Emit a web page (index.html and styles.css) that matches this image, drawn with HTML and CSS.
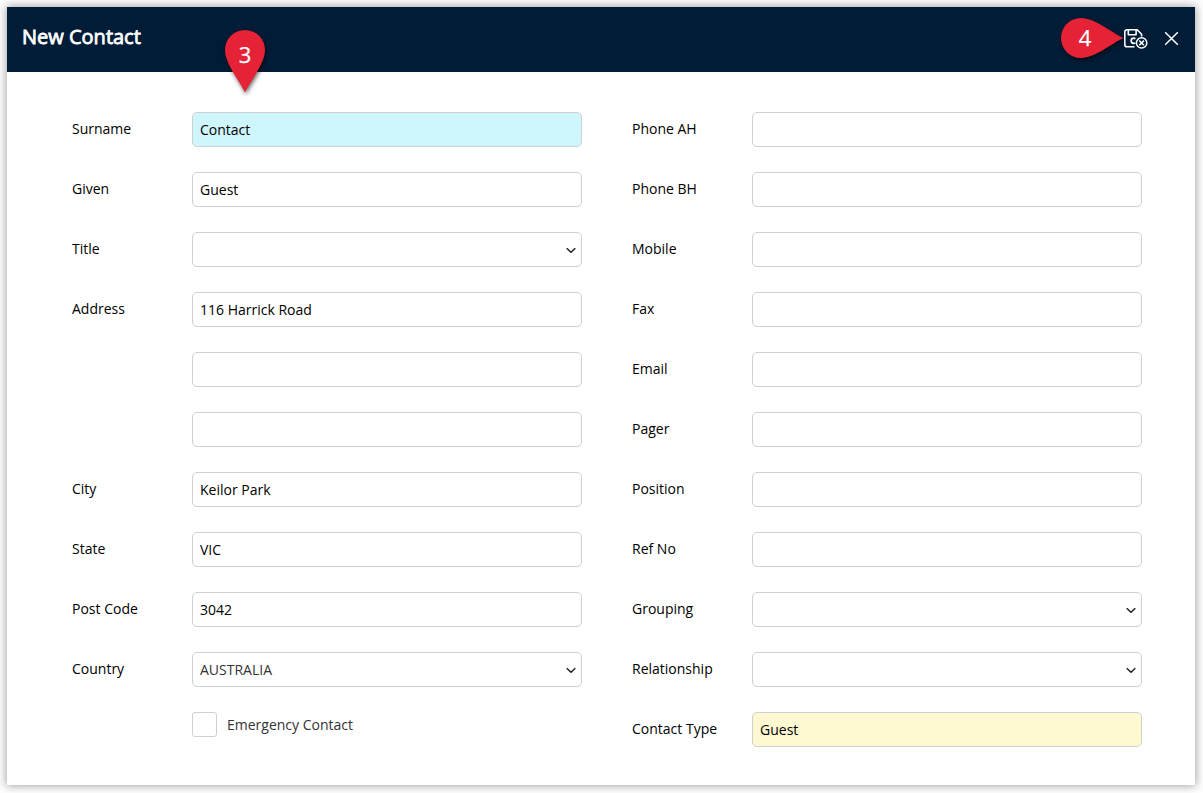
FILE: index.html
```html
<!DOCTYPE html>
<html lang="en">
<head>
<meta charset="utf-8">
<title>New Contact</title>
<link rel="stylesheet" href="styles.css">
</head>
<body>
<main class="dialog">
  <header class="header">
    <h1 class="title">New Contact</h1>
    <div class="actions">
      <svg class="save" width="24" height="20" viewBox="0 0 24 20" fill="none" stroke="#fff" stroke-width="1.6" stroke-linejoin="round">
        <path d="M10.5 17.8H3.2Q.8 17.8 .8 15.4V3.1Q.8.8 3.2.8H13.2L17.6 5.2V7.6"/>
        <path d="M4.3 1V5.8H12.1V1"/>
        <path d="M11.4 9.7Q10.6 9.2 9.6 9.2Q7.2 9.2 7.2 11.8Q7.2 14.4 9.6 14.4Q10.6 14.4 11.3 13.9" stroke-width="1.7"/>
        <circle cx="17.6" cy="13.9" r="5.2" stroke-width="1.5"/>
        <path d="M15.3 11.6l4.6 4.6M19.9 11.6L15.3 16.2" stroke-width="1.5"/>
      </svg>
      <svg class="close" width="15" height="15" viewBox="0 0 15 15" fill="none" stroke="#fff" stroke-width="1.5"><path d="M1.2 1.2L13.8 13.8M13.8 1.2L1.2 13.8"/></svg>
    </div>
  </header>
  <form class="form">
    <div class="column">
      <div class="row"><span class="label">Surname</span><div class="field required">Contact</div></div>
      <div class="row"><span class="label">Given</span><div class="field">Guest</div></div>
      <div class="row"><span class="label">Title</span><div class="field select"><svg class="chevron" viewBox="0 0 12 7"><path d="M1.7 1.2L6 5.2L10.3 1.2"/></svg></div></div>
      <div class="row"><span class="label">Address</span><div class="field">116 Harrick Road</div></div>
      <div class="row"><span class="label"></span><div class="field"></div></div>
      <div class="row"><span class="label"></span><div class="field"></div></div>
      <div class="row"><span class="label">City</span><div class="field">Keilor Park</div></div>
      <div class="row"><span class="label">State</span><div class="field">VIC</div></div>
      <div class="row"><span class="label">Post Code</span><div class="field">3042</div></div>
      <div class="row"><span class="label">Country</span><div class="field select">AUSTRALIA<svg class="chevron" viewBox="0 0 12 7"><path d="M1.7 1.2L6 5.2L10.3 1.2"/></svg></div></div>
      <div class="check-row"><span class="checkbox"></span><span>Emergency Contact</span></div>
    </div>
    <div class="column">
      <div class="row"><span class="label">Phone AH</span><div class="field"></div></div>
      <div class="row"><span class="label">Phone BH</span><div class="field"></div></div>
      <div class="row"><span class="label">Mobile</span><div class="field"></div></div>
      <div class="row"><span class="label">Fax</span><div class="field"></div></div>
      <div class="row"><span class="label">Email</span><div class="field"></div></div>
      <div class="row"><span class="label">Pager</span><div class="field"></div></div>
      <div class="row"><span class="label">Position</span><div class="field"></div></div>
      <div class="row"><span class="label">Ref No</span><div class="field"></div></div>
      <div class="row"><span class="label">Grouping</span><div class="field select"><svg class="chevron" viewBox="0 0 12 7"><path d="M1.7 1.2L6 5.2L10.3 1.2"/></svg></div></div>
      <div class="row"><span class="label">Relationship</span><div class="field select"><svg class="chevron" viewBox="0 0 12 7"><path d="M1.7 1.2L6 5.2L10.3 1.2"/></svg></div></div>
      <div class="row"><span class="label">Contact Type</span><div class="field locked">Guest</div></div>
    </div>
  </form>
  <div class="marker marker-fields">
    <svg width="40" height="63" viewBox="0 0 40 63"><path d="M20 62.5C16 53 0 34 0 20A20 20 0 0 1 40 20C40 34 24 53 20 62.5Z"/></svg>
    <span class="number">3</span>
  </div>
  <div class="marker marker-save">
    <svg width="63" height="40" viewBox="0 0 63 40"><path d="M62.5 20C53 24 34 40 20 40A20 20 0 0 1 20 0C34 0 53 16 62.5 20Z"/></svg>
    <span class="number">4</span>
  </div>
</main>
</body>
</html>
```
FILE: styles.css
```css
* { box-sizing: border-box; }
body {
  margin: 0;
  padding: 7px;
  height: 793px;
  overflow: hidden;
  background: #fff;
  font: 14px/20px "Open Sans", "Noto Sans", sans-serif;
  color: #000;
}
.dialog {
  position: relative;
  width: 1188px;
  height: 778px;
  background: #fff;
  box-shadow: 0 0 9px 1px rgba(0, 0, 0, .36);
}
.header {
  display: flex;
  justify-content: space-between;
  height: 65px;
  padding: 15px 16px 0 15px;
  background: #001c36;
  color: #fff;
}
.title {
  margin: 0;
  font-size: 20px;
  line-height: 30px;
  font-weight: 400;
  -webkit-text-stroke: .8px #fff;
}
.actions { display: flex; gap: 16px; }
.save { margin-top: 7px; }
.close { margin-top: 9px; }
.form {
  display: flex;
  gap: 50px;
  padding: 40px 0 0 65px;
}
.column {
  display: flex;
  flex-direction: column;
  gap: 25px;
  width: 510px;
}
.row { display: flex; height: 35px; }
.label { width: 120px; padding-top: 7px; }
.field {
  display: flex;
  align-items: center;
  width: 390px;
  height: 35px;
  padding: 1px 7px 0;
  border: 1px solid #d0d0d0;
  border-radius: 5px;
}
.required { background: #cff6fc; }
.locked { background: #fff9d1; }
.select { padding-right: 4px; color: #333; }
.chevron {
  width: 12px;
  height: 7px;
  margin-left: auto;
  fill: none;
  stroke: #222;
  stroke-width: 1.5;
}
.check-row {
  display: flex;
  align-items: center;
  gap: 10px;
  height: 25px;
  padding-left: 120px;
  color: #333;
}
.checkbox {
  width: 25px;
  height: 25px;
  border: 1px solid #d0d0d0;
  border-radius: 3px;
}
.marker { position: absolute; color: #fff; }
.marker svg {
  display: block;
  fill: #e52236;
  filter: drop-shadow(1px 2px 2px rgba(0, 0, 0, .6));
}
.marker-fields { left: 218px; top: 23px; }
.marker-save { left: 1054px; top: 11px; }
.number {
  position: absolute;
  left: 0;
  top: 9px;
  width: 40px;
  font-size: 22px;
  line-height: 30px;
  text-align: center;
  -webkit-text-stroke: .25px #fff;
}
.marker-save .number { left: 4px; top: 4px; }
```
